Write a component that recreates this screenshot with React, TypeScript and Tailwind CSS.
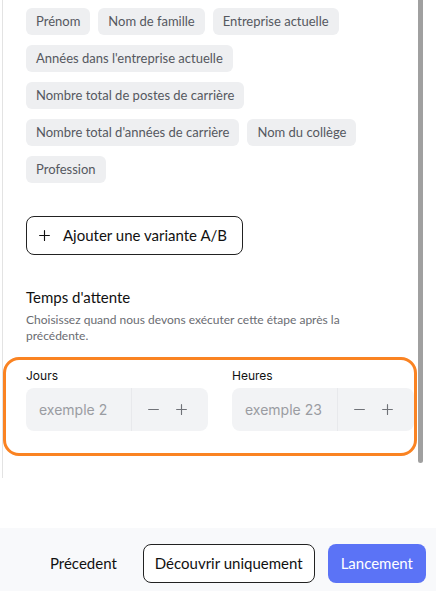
import React from 'react';

const fields = [
  'Prénom',
  'Nom de famille',
  'Entreprise actuelle',
  "Années dans l'entreprise actuelle",
  'Nombre total de postes de carrière',
  "Nombre total d'années de carrière",
  'Nom du collège',
  'Profession',
];

const PlusIcon = ({ className = '' }: { className?: string }) => (
  <svg viewBox="0 0 16 16" className={className} fill="none" stroke="currentColor" strokeWidth="1.4" strokeLinecap="round">
    <path d="M8 2v12M2 8h12" />
  </svg>
);

const MinusIcon = ({ className = '' }: { className?: string }) => (
  <svg viewBox="0 0 16 16" className={className} fill="none" stroke="currentColor" strokeWidth="1.4" strokeLinecap="round">
    <path d="M2 8h12" />
  </svg>
);

const Stepper = ({ label, placeholder }: { label: string; placeholder: string }) => (
  <div className="flex-1 flex flex-col gap-1">
    <span className="text-[12px] leading-4 text-[#111]" style={{ fontFamily: 'Inter, sans-serif' }}>{label}</span>
    <div className="h-[43px] flex items-center bg-[#f2f3f5] rounded-lg">
      <input
        placeholder={placeholder}
        className="w-0 flex-1 h-full bg-transparent pl-[13px] text-[14px] text-[#333] placeholder:text-[#9a9ca2] outline-none border-r border-[#e8e9ec]"
        style={{ fontFamily: 'Inter, sans-serif' }}
      />
      <div className="flex items-center gap-[15px] pl-[15px] pr-5 text-[#707278]">
        <MinusIcon className="w-[13px] h-[13px]" />
        <PlusIcon className="w-[13px] h-[13px]" />
      </div>
    </div>
  </div>
);

export default function App() {
  return (
    <div className="w-[436px] h-[591px] flex flex-col bg-white" style={{ fontFamily: 'Lato, "Noto Sans", sans-serif' }}>
      <div className="flex pl-[2px]">
        <div className="w-[415px] h-[478px] border-l border-[#e3e3e3] pt-2 flex flex-col">
          <div className="flex flex-wrap gap-x-2 gap-y-[10px] px-[23px]">
            {fields.map((f) => (
              <span key={f} className="h-[27px] flex items-center px-[10px] rounded-md bg-[#eeeff1] text-[13px] text-[#555860]">
                {f}
              </span>
            ))}
          </div>

          <div className="px-[23px] mt-[33px]">
            <button className="h-[39px] flex items-center gap-[12px] pl-[11px] pr-[15px] border border-[#222] rounded-lg text-[15px] text-[#111]">
              <PlusIcon className="w-[13px] h-[13px]" />
              Ajouter une variante A/B
            </button>
          </div>

          <div className="px-[23px] mt-[32px]">
            <h3 className="text-[15px] leading-5 text-[#111]">Temps d'attente</h3>
            <p className="mt-[5px] text-[12px] leading-4 text-[#6a6c72]">
              Choisissez quand nous devons exécuter cette étape après la précédente.
            </p>
          </div>

          <div className="mt-[13px] border-[3px] border-[#fa8322] rounded-[16px] pt-[8px] pb-[22px] pl-[20px] flex gap-6">
            <Stepper label="Jours" placeholder="exemple 2" />
            <Stepper label="Heures" placeholder="exemple 23" />
          </div>
        </div>
        <div className="ml-px w-[5px] h-[463px] rounded-b-full bg-[#a0a0a0]" />
      </div>

      <div className="mt-auto h-[63px] bg-[#f8f9fb] flex items-start justify-end pt-4 pr-[10px]">
        <button className="h-[39px] px-4 text-[15px] text-[#111]">Précedent</button>
        <button className="h-[39px] ml-[10px] px-[11px] border border-[#222] rounded-lg text-[15px] text-[#111] bg-white">
          Découvrir uniquement
        </button>
        <button className="h-[39px] ml-[13px] px-[13px] rounded-lg bg-[#5b73f6] text-[15px] text-white">Lancement</button>
      </div>
    </div>
  );
}
